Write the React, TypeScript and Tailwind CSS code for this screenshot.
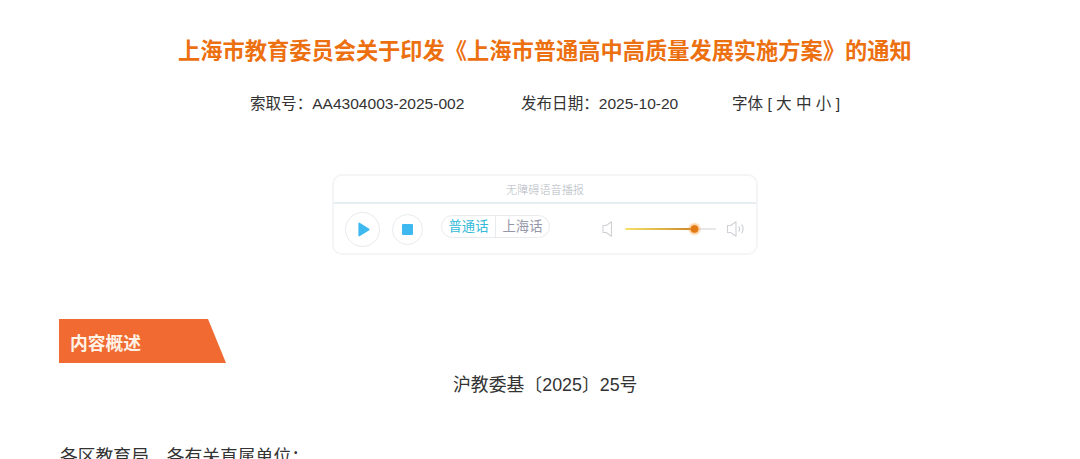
import { useState } from "react";

const sizes = ["大", "中", "小"];
const dialects = ["普通话", "上海话"];

function VoicePlayer() {
  const [dialect, setDialect] = useState("普通话");

  return (
    <section className="ml-[332px] mt-[58px] h-[81px] w-[426px] rounded-[10px] border-2 border-[#f3f5f6] bg-white">
      {/* Caption */}
      <div className="h-[28px] border-b-2 border-[#e6edf1] text-center text-[11.15px] font-light leading-[28px] text-[#b3b8c2]">
        无障碍语音播报
      </div>

      {/* Controls */}
      <div className="flex h-[49px] items-center pl-[11px] pt-px">
        <button className="flex h-[35px] w-[35px] shrink-0 items-center justify-center rounded-full border border-[#e6eaee]">
          <svg className="ml-[3px] h-[15px] w-[12px]" viewBox="0 0 12 15">
            <path
              d="M1.2 1.4v12.2L10.8 7.5z"
              fill="#3db9ef"
              stroke="#3db9ef"
              strokeWidth="1.6"
              strokeLinejoin="round"
            />
          </svg>
        </button>
        <button className="ml-[12px] flex h-[31px] w-[31px] shrink-0 items-center justify-center rounded-full border border-[#e8ecef]">
          <span className="h-[11px] w-[11px] rounded-[1px] bg-[#3db9ef]" />
        </button>

        {/* Dialect switch */}
        <div className="mb-[6px] ml-[18px] mr-px flex h-[23px] w-[109px] shrink-0 overflow-hidden rounded-full border border-[#e8ebee] text-[13.3px] leading-[21px]">
          {dialects.map((name) => (
            <button
              key={name}
              onClick={() => setDialect(name)}
              className={`flex-1 border-r border-[#e8ebee] last:border-r-0 ${
                dialect === name ? "text-[#35bad9]" : "text-[#9697a8]"
              }`}
            >
              {name}
            </button>
          ))}
        </div>

        {/* Volume */}
        <svg
          className="ml-[50px] h-[18px] w-[14px] shrink-0"
          viewBox="0 0 14 18"
          fill="none"
          stroke="#cfd1d5"
          strokeWidth="1.1"
        >
          <path d="M2 5.5h3.2l5.3-3.7v14.4l-5.3-3.7H2z" strokeLinejoin="round" />
        </svg>
        <svg className="ml-[8px] h-[20px] w-[96px] shrink-0" viewBox="0 0 96 20">
          <defs>
            <linearGradient id="level" x1="0" x2="1" y1="0" y2="0">
              <stop offset="0" stopColor="#f5e267" />
              <stop offset="0.55" stopColor="#dfb246" />
              <stop offset="1" stopColor="#c98225" />
            </linearGradient>
            <radialGradient id="glow">
              <stop offset="0.4" stopColor="#fba03c" stopOpacity="0.8" />
              <stop offset="1" stopColor="#fba03c" stopOpacity="0" />
            </radialGradient>
          </defs>
          <rect x="72" y="9.2" width="21" height="1.6" fill="#e3e3e7" />
          <rect x="2" y="9" width="70" height="2" rx="1" fill="url(#level)" />
          <circle cx="71.5" cy="10" r="7" fill="url(#glow)" />
          <circle cx="71.5" cy="10" r="3.8" fill="#e27b14" />
        </svg>
        <svg
          className="ml-[7px] h-[18px] w-[20px] shrink-0"
          viewBox="0 0 20 18"
          fill="none"
          stroke="#cfd1d5"
          strokeWidth="1.1"
        >
          <path d="M1.5 5.5h3.2l5.3-3.7v14.4l-5.3-3.7H1.5z" strokeLinejoin="round" />
          <path d="M12.7 6.3q2 2.7 0 5.4M15.6 4.6q3 4.4 0 8.8" />
        </svg>
      </div>
    </section>
  );
}

export default function App() {
  return (
    <main className="h-[459px] w-[1080px] overflow-hidden bg-white font-['Liberation_Sans','Noto_Sans_CJK_SC',sans-serif] text-[#333]">
      <h1 className="pl-[178px] pt-[36px] text-[22.24px] font-bold leading-[32px] whitespace-nowrap text-[#ec7010]">
        上海市教育委员会关于印发《上海市普通高中高质量发展实施方案》的通知
      </h1>

      <div className="mt-[24px] flex pl-[250px] text-[15.55px] leading-[24px] whitespace-nowrap">
        <span className="w-[271px]">索取号：AA4304003-2025-002</span>
        <span className="w-[211px]">发布日期：2025-10-20</span>
        <span>字体 [ {sizes.join(" ")} ]</span>
      </div>

      <VoicePlayer />

      {/* Section tab */}
      <h2 className="ml-[59px] mt-[64px] h-[44px] w-[167px] bg-[#f06a32] pl-[11px] text-[17.8px] font-bold leading-[50px] text-[#fff3e6] [clip-path:polygon(0_0,149px_0,100%_100%,0_100%)]">
        内容概述
      </h2>

      <p className="mt-[9px] pl-[453px] text-[17.85px] leading-[26px] whitespace-nowrap">
        沪教委基〔2025〕25号
      </p>
      <p className="mt-[46px] pl-[60px] text-[17.8px] leading-[26px] whitespace-nowrap">
        各区教育局、各有关直属单位：
      </p>
    </main>
  );
}
